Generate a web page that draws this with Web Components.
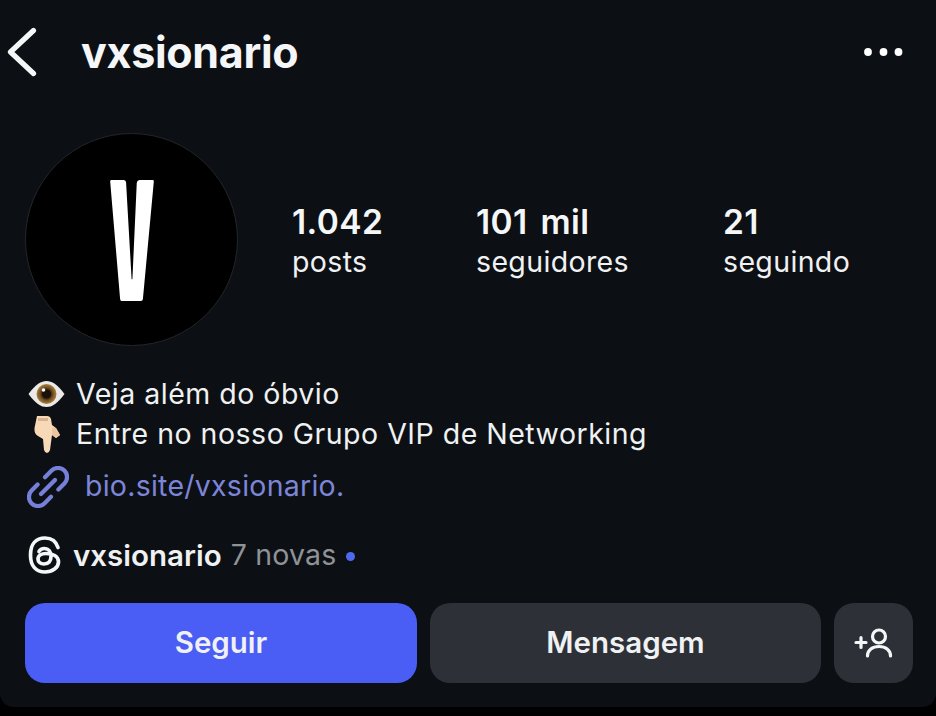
<!DOCTYPE html>
<html lang="pt"><head><meta charset="utf-8"><title>vxsionario</title>
<style>
html,body{margin:0;padding:0;background:#000}
body{width:936px;height:716px;overflow:hidden;font-family:Inter,"Liberation Sans",sans-serif;color:#f5f6f7}
</style></head><body>
<ig-profile>
  <ig-header name="vxsionario"></ig-header>
  <ig-summary>
    <ig-stat value="1.042" label="posts" style="width:184px"></ig-stat>
    <ig-stat value="101 mil" label="seguidores" style="width:247px"></ig-stat>
    <ig-stat value="21" label="seguindo"></ig-stat>
  </ig-summary>
  <ig-bio></ig-bio>
  <ig-actions></ig-actions>
</ig-profile>
<script>
function def(name, html, init){
  customElements.define(name, class extends HTMLElement{
    constructor(){super();this.attachShadow({mode:'open'}).innerHTML=html;}
    connectedCallback(){if(init)init(this);}
  });
}
def('ig-profile',`<style>
:host{display:flex;flex-direction:column;box-sizing:border-box;width:936px;height:707px;background:#0c1014;border-radius:0 0 14px 14px;overflow:hidden}
</style><slot></slot>`);
def('ig-header',`<style>
:host{display:flex;align-items:center;height:104px;box-sizing:border-box;padding:0 32px 0 7px}
svg{display:block;flex:none}
h1{margin:0 0 0 44px;font:700 43px/52px Inter,sans-serif;letter-spacing:-.3px;color:#f5f6f7;flex:1}
</style>
<svg width="30" height="50" viewBox="0 0 30 50"><path d="M26.500 3.500 3.500 25 26.500 46.500" fill="none" stroke="#f5f6f7" stroke-width="5.200" stroke-linecap="round" stroke-linejoin="round"/></svg>
<h1 id="n"></h1>
<svg width="40" height="8" viewBox="0 0 40 8"><circle cx="4" cy="4" r="3.9" fill="#fff"/><circle cx="19.500" cy="4" r="3.900" fill="#fff"/><circle cx="34.500" cy="4" r="3.900" fill="#fff"/></svg>`,
el=>{el.shadowRoot.getElementById('n').textContent=el.getAttribute('name')});
def('ig-summary',`<style>
:host{display:flex;align-items:center;height:214px;margin-top:28px;padding-left:25px}
.av{flex:none;width:213px;height:213px;box-sizing:border-box;border-radius:50%;background:#000;border:1px solid #22252a;display:flex;align-items:center;justify-content:center;margin-right:54px}
.av svg{display:block;margin-top:2px}
.s{display:flex;align-items:center;margin-top:6px}
</style>
<div class="av"><svg width="44" height="121" viewBox="0 0 44 122"><path d="M1.200 0H13.500Q15.500 0 16 2L21.600 100H22.400L26.800 3Q27.300 0 30 0H43Q44 0 44 1.500L33 120Q32.800 122 31 122H11.500Q10.200 122 10 120L0 1.500Q0 0 1.200 0Z" fill="#fff"/></svg></div>
<div class="s"><slot></slot></div>`);
def('ig-stat',`<style>
:host{display:block;box-sizing:border-box;flex:none}
b{display:block;font:600 33.500px/39px Inter,sans-serif;letter-spacing:.4px;word-spacing:4px;color:#f5f6f7}
span{display:block;font:400 28.500px/39px Inter,sans-serif;letter-spacing:.35px;color:#f0f1f2}
</style><b id="v"></b><span id="l"></span>`,
el=>{el.shadowRoot.getElementById('v').textContent=el.getAttribute('value');el.shadowRoot.getElementById('l').textContent=el.getAttribute('label')});
def('ig-bio',`<style>
:host{display:block;margin-top:28px;padding-left:27px;font:400 28.500px/40px Inter,sans-serif;letter-spacing:.5px;color:#f0f1f2}
.r{display:flex;align-items:center;height:40px}
.ic{flex:none;display:block}
.e{width:39px;margin-right:10px}
.link{height:46px;margin-top:9px;color:#7c85d8;letter-spacing:.25px}
.link svg{margin-right:16px;margin-top:2px}
.th{height:46px;margin-top:23px;letter-spacing:0}
.th svg{margin-right:11px;margin-left:1px}
.th b{font-weight:600;font-size:29.500px;color:#f0f1f2}
.th i{font-style:normal;color:#8f9297;margin-left:9px;letter-spacing:.2px}
.dot{width:9px;height:9px;border-radius:50%;background:#4f68f0;margin-left:9px;margin-top:3px}
</style>
<div class="r"><svg class="ic e" width="39" height="30" viewBox="0 0 39 30">
<defs><radialGradient id="ir" cx=".5" cy=".5" r=".5"><stop offset=".35" stop-color="#2a1a10"/><stop offset=".72" stop-color="#7d5a28"/><stop offset="1" stop-color="#a8843f"/></radialGradient></defs>
<path d="M1.500 15C9 5 14 2 19.500 2S30 5 37.500 15C30 25 25 28 19.500 28S9 25 1.500 15Z" fill="#eceae8"/>
<circle cx="19.500" cy="15" r="10" fill="url(#ir)"/><circle cx="19.500" cy="15" r="4.500" fill="#1c1008"/><circle cx="16.500" cy="11" r="1.800" fill="#fff"/></svg><span>Veja além do óbvio</span></div>
<div class="r"><svg class="ic e" width="39" height="38" viewBox="0 0 39 38">
<path d="M10 1H20Q23 1 24 4L25 10 29 13 33 20 29 23 25 20 23 35Q22 38 20 38T17 35L16 24 11 21Q7 19 7.500 13Z" fill="#f7d9b8"/>
<path d="M11 3H21V6H11Z" fill="#d9b294"/><path d="M25 13 29 13 33 20 29 23 25 20Z" fill="#eec49c"/></svg><span>Entre no nosso Grupo VIP de Networking</span></div>
<div class="r link"><svg class="ic" width="42" height="42" viewBox="0 0 42 42" fill="none" stroke="#7680d8" stroke-width="4.200" stroke-linecap="round">
<path d="M14 28 28 14"/><path d="M18 11.200 24.600 4.600A9 9 0 0 1 37.400 17.400L31.400 23.400"/><path d="M24 30.800 17.400 37.400A9 9 0 0 1 4.600 24.600L10.600 18.600"/></svg><span>bio.site/vxsionario.</span></div>
<div class="r th"><svg class="ic" width="34" height="38" viewBox="0 0 34 38" fill="none" stroke="#f5f6f7" stroke-width="3.700" stroke-linecap="round">
<path d="M30 11.500C28 5 23.500 2 17 2 8 2 2.500 8 2.500 19S8 36 17 36c7.500 0 13.500-4.500 13.500-10 0-6-6-8.500-12.500-8.500-4.500 0-8 2-8 5.500 0 3 2.500 5 6 5 4.500 0 7-3 7-7.500 0-5-2.500-8-6.500-8-2.500 0-4.500 1-5.500 3"/></svg><b>vxsionario</b><i>7 novas</i><span class="dot"></span></div>`);
def('ig-actions',`<style>
:host{display:flex;gap:13px;margin-top:25px;padding-left:25px}
button{all:unset;box-sizing:border-box;height:80px;border-radius:20px;display:flex;align-items:center;justify-content:center;font:600 29.500px/1 Inter,sans-serif;color:#f0f1f3;background:#2d3137;width:391px}
.p{background:#4a5df5;width:392px}
.i{width:79px}
svg{display:block}
</style>
<button class="p">Seguir</button><button>Mensagem</button>
<button class="i"><svg width="40" height="30" viewBox="0 0 40 30" fill="none" stroke="#f5f6f7" stroke-width="3.200" stroke-linecap="round"><circle cx="25" cy="8.500" r="6.500"/><path d="M13.500 28c0-6 5-9.500 11.500-9.500S36.500 22 36.500 28"/><path d="M2 14.500h10M7 9.500v10"/></svg></button>`);
</script>
</body></html>
